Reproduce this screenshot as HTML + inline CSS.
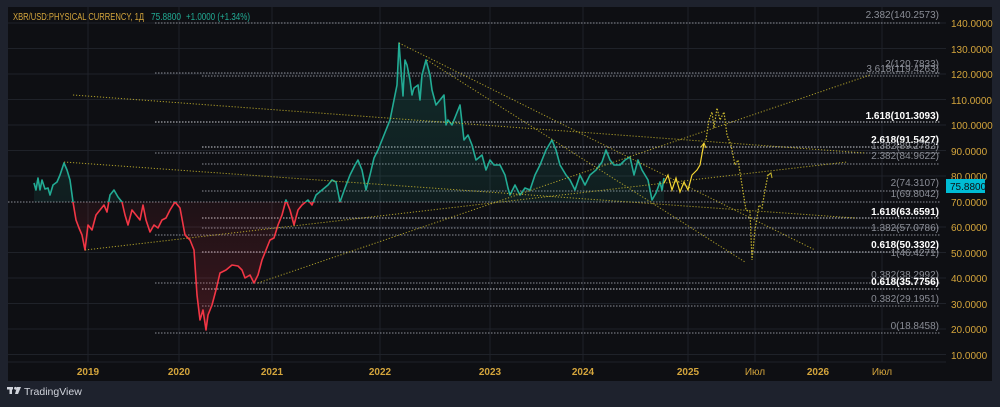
<!DOCTYPE html>
<html><head><meta charset="utf-8"><style>
html,body{margin:0;padding:0;background:#1e222d;width:1000px;height:407px;overflow:hidden;font-family:"Liberation Sans",sans-serif}
svg{position:absolute;left:0;top:0}
</style></head><body>
<svg width="1000" height="407" viewBox="0 0 1000 407">
<defs>
<clipPath id="up"><rect x="0" y="0" width="1000" height="202"/></clipPath>
<clipPath id="dn"><rect x="0" y="202" width="1000" height="200"/></clipPath>
<linearGradient id="gu" x1="0" y1="0" x2="0" y2="1"><stop offset="0" stop-color="#22ab94" stop-opacity="0.18"/><stop offset="1" stop-color="#22ab94" stop-opacity="0.03"/></linearGradient>
<linearGradient id="gd" x1="0" y1="0" x2="0" y2="1"><stop offset="0" stop-color="#f23645" stop-opacity="0.03"/><stop offset="1" stop-color="#f23645" stop-opacity="0.2"/></linearGradient>
</defs>
<rect x="0" y="0" width="1000" height="407" fill="#1e222d"/>
<rect x="8" y="7" width="984" height="374" fill="#0e0f13"/>
<g stroke="#1f2229" stroke-width="1">
<line x1="8" y1="23" x2="946" y2="23"/><line x1="8" y1="48.5" x2="946" y2="48.5"/><line x1="8" y1="74" x2="946" y2="74"/><line x1="8" y1="99.5" x2="946" y2="99.5"/><line x1="8" y1="125" x2="946" y2="125"/><line x1="8" y1="150.5" x2="946" y2="150.5"/><line x1="8" y1="176" x2="946" y2="176"/><line x1="8" y1="227" x2="946" y2="227"/><line x1="8" y1="252.5" x2="946" y2="252.5"/><line x1="8" y1="278" x2="946" y2="278"/><line x1="8" y1="303.5" x2="946" y2="303.5"/><line x1="8" y1="329" x2="946" y2="329"/><line x1="8" y1="354.5" x2="946" y2="354.5"/>
<line x1="88" y1="7" x2="88" y2="362"/><line x1="179" y1="7" x2="179" y2="362"/><line x1="272" y1="7" x2="272" y2="362"/><line x1="380" y1="7" x2="380" y2="362"/><line x1="490" y1="7" x2="490" y2="362"/><line x1="583" y1="7" x2="583" y2="362"/><line x1="688" y1="7" x2="688" y2="362"/><line x1="755" y1="7" x2="755" y2="362"/><line x1="818" y1="7" x2="818" y2="362"/><line x1="882" y1="7" x2="882" y2="362"/>
<line x1="8" y1="362" x2="946" y2="362"/>
</g>
<g stroke="#8a8d96" stroke-width="1" stroke-dasharray="1.5 1.5">
<line x1="155" y1="23" x2="940" y2="23"/>
<line x1="155" y1="73" x2="940" y2="73"/><line x1="202" y1="76" x2="940" y2="76"/>
<line x1="155" y1="122" x2="940" y2="122" stroke="#c8cad0"/>
<line x1="202" y1="147" x2="940" y2="147" stroke="#c8cad0"/><line x1="155" y1="153" x2="940" y2="153"/>
<line x1="202" y1="164" x2="940" y2="164"/>
<line x1="202" y1="191" x2="940" y2="191"/>
<line x1="8" y1="202" x2="940" y2="202"/>
<line x1="202" y1="218" x2="940" y2="218" stroke="#c8cad0"/>
<line x1="202" y1="228" x2="940" y2="228"/>
<line x1="155" y1="235" x2="940" y2="235"/>
<line x1="202" y1="252" x2="940" y2="252" stroke="#c8cad0"/>
<line x1="155" y1="283" x2="940" y2="283"/>
<line x1="202" y1="289" x2="940" y2="289" stroke="#c8cad0"/>
<line x1="202" y1="306" x2="940" y2="306"/>
<line x1="155" y1="333" x2="940" y2="333"/>
</g>
<g font-size="10" text-anchor="end" fill="#8a8d96">
<text x="939" y="18">2.382(140.2573)</text>
<text x="939" y="67">2(120.7833)</text>
<text x="939" y="72">3.618(119.4263)</text>
<text x="939" y="119" fill="#fff" font-weight="bold">1.618(101.3093)</text>
<text x="939" y="143" fill="#fff" font-weight="bold">2.618(91.5427)</text>
<text x="939" y="149">1.382(89.2782)</text>
<text x="939" y="159">2.382(84.9622)</text>
<text x="939" y="186">2(74.3107)</text>
<text x="939" y="197">1(69.8042)</text>
<text x="939" y="215" fill="#fff" font-weight="bold">1.618(63.6591)</text>
<text x="939" y="231">1.382(57.0786)</text>
<text x="939" y="248" fill="#fff" font-weight="bold">0.618(50.3302)</text>
<text x="939" y="256">1(46.4271)</text>
<text x="939" y="278">0.382(38.2992)</text>
<text x="939" y="285" fill="#fff" font-weight="bold">0.618(35.7756)</text>
<text x="939" y="302">0.382(29.1951)</text>
<text x="939" y="329">0(18.8458)</text>
</g>
<polygon points="34,202 34,183 38,178 40,190 42,180 45,189 48,188 50,195 53,185 57,182 60,175 64,163 67,170 70,180 73,202 76,220 79,228 82,235 85,250 88,225 92,230 96,215 100,210 104,205 110,195 114,190 118,197 122,202 125,215 128,225 132,210 136,215 140,220 143,205 146,220 150,232 154,225 158,228 162,220 166,218 170,210 175,202 180,208 185,235 190,240 194,250 197,295 200,320 203,310 206,330 208,315 212,305 216,290 220,273 226,270 232,265 238,266 242,270 245,278 250,275 254,283 258,275 262,260 266,250 270,240 274,238 278,225 282,215 286,200 290,210 294,225 298,210 302,205 308,200 312,205 316,195 322,190 328,185 332,180 336,182 340,202 345,188 350,175 355,165 358,160 362,170 366,190 370,175 374,158 378,150 382,140 386,130 390,120 394,100 397,85 399,43 401,70 404,95 407,65 410,80 414,95 418,85 422,75 426,60 430,75 432,90 436,105 440,100 444,95 448,120 452,125 456,115 460,105 464,140 468,135 472,145 476,160 482,155 486,170 490,160 494,165 500,165 505,175 510,195 515,185 520,195 525,188 530,190 535,175 540,165 546,150 552,140 556,150 560,165 566,175 570,180 575,190 580,175 585,185 590,175 596,170 602,162 606,150 610,160 614,165 620,165 625,160 630,157 634,175 638,160 642,170 648,180 652,200 656,193 660,182 664,178 664,202" fill="url(#gu)" clip-path="url(#up)"/>
<polygon points="34,202 34,183 38,178 40,190 42,180 45,189 48,188 50,195 53,185 57,182 60,175 64,163 67,170 70,180 73,202 76,220 79,228 82,235 85,250 88,225 92,230 96,215 100,210 104,205 110,195 114,190 118,197 122,202 125,215 128,225 132,210 136,215 140,220 143,205 146,220 150,232 154,225 158,228 162,220 166,218 170,210 175,202 180,208 185,235 190,240 194,250 197,295 200,320 203,310 206,330 208,315 212,305 216,290 220,273 226,270 232,265 238,266 242,270 245,278 250,275 254,283 258,275 262,260 266,250 270,240 274,238 278,225 282,215 286,200 290,210 294,225 298,210 302,205 308,200 312,205 316,195 322,190 328,185 332,180 336,182 340,202 345,188 350,202" fill="url(#gd)" clip-path="url(#dn)"/>
<defs><polyline id="pl" fill="none" stroke-width="1.6" stroke-linejoin="round" points="34,183 36,190 38,178 40,190 42,180 45,189 48,188 50,195 53,185 57,182 60,175 64,163 67,170 70,180 73,202 76,220 79,228 82,235 85,250 88,225 92,230 96,215 100,210 104,205 107,212 110,195 114,190 118,197 122,202 125,215 128,225 132,210 136,215 140,220 143,205 146,220 150,232 154,225 158,228 162,220 166,218 170,210 175,202 180,208 185,235 190,240 194,250 197,295 200,320 203,310 206,330 208,315 212,305 216,290 220,273 226,270 232,265 238,266 242,270 245,278 250,275 254,283 258,275 262,260 266,250 270,240 274,238 278,225 282,215 286,200 290,210 294,225 298,210 302,205 308,200 312,205 316,195 322,190 328,185 332,180 336,182 340,202 345,188 350,175 355,165 358,160 362,170 366,190 370,175 374,158 378,150 382,140 386,130 390,120 394,100 397,85 399,43 401,70 403,96 405,60 407,65 410,80 412,95 414,88 418,85 420,100 422,75 426,60 430,75 432,90 436,105 440,100 444,95 446,125 448,120 452,125 456,115 460,105 464,140 468,135 472,145 476,160 482,155 486,170 490,160 494,165 500,165 505,175 508,188 510,195 515,185 520,195 525,188 530,190 535,175 540,165 546,150 552,140 556,150 560,165 566,175 570,180 575,190 580,175 585,185 590,175 596,170 602,162 606,150 610,160 614,165 620,165 625,160 630,157 634,175 638,160 642,170 648,180 652,200 656,193 660,182 662,190 664,178"/></defs>
<use href="#pl" stroke="#22ab94" clip-path="url(#up)"/>
<use href="#pl" stroke="#f23645" clip-path="url(#dn)"/>
<g stroke="#c8b62e" stroke-width="1" stroke-dasharray="1.2 1.8" fill="none" opacity="0.85">
<line x1="73" y1="95" x2="865" y2="153"/>
<line x1="64" y1="162" x2="855" y2="218"/>
<line x1="85" y1="250" x2="847" y2="162"/>
<line x1="258" y1="283" x2="870" y2="75"/>
<line x1="399" y1="43" x2="815" y2="250"/>
<line x1="427" y1="60" x2="745" y2="262"/>
</g>
<polyline fill="none" stroke="#f5d634" stroke-width="1.2" points="664,183 668,175 672,190 676,178 680,192 684,182 688,190 692,175 697,170 700,165 704,143"/>
<polyline fill="none" stroke="#f5d634" stroke-width="1" points="701,147 704,143 706,148"/>
<polyline fill="none" stroke="#c8b62e" stroke-width="1.2" stroke-dasharray="1.5 1.5" points="706,140 709,120 712,112 714,128 717,108 720,120 724,112 727,135 731,145 735,165 738,160 742,185 746,210 750,212 752,260 755,230 759,205 762,208 765,190 768,175 771,173"/>
<polyline fill="none" stroke="#c8b62e" stroke-width="1" points="767,176 771,173 772,178"/>
<text x="13" y="20" font-size="10" fill="#d4a53c" textLength="131" lengthAdjust="spacingAndGlyphs">XBR/USD:PHYSICAL CURRENCY, 1Д</text>
<text x="151" y="20" font-size="10" fill="#22ab94" textLength="30" lengthAdjust="spacingAndGlyphs">75.8800</text>
<text x="186" y="20" font-size="10" fill="#22ab94" textLength="64" lengthAdjust="spacingAndGlyphs">+1.0000 (+1.34%)</text>
<g font-size="10" fill="#d4a53c" text-anchor="start">
<text x="951" y="27">140.0000</text><text x="951" y="53">130.0000</text><text x="951" y="78">120.0000</text><text x="951" y="104">110.0000</text><text x="951" y="129">100.0000</text><text x="951" y="155">90.0000</text><text x="951" y="180">80.0000</text><text x="951" y="206">70.0000</text><text x="951" y="231">60.0000</text><text x="951" y="257">50.0000</text><text x="951" y="282">40.0000</text><text x="951" y="308">30.0000</text><text x="951" y="333">20.0000</text><text x="951" y="359">10.0000</text>
</g>
<rect x="946" y="179" width="39" height="14" fill="#00bcd4"/>
<text x="950" y="190" font-size="10" fill="#0e0f13">75.8800</text>
<g font-size="10" fill="#d4a53c" text-anchor="middle" font-weight="bold">
<text x="88" y="375">2019</text><text x="179" y="375">2020</text><text x="272" y="375">2021</text><text x="380" y="375">2022</text><text x="490" y="375">2023</text><text x="583" y="375">2024</text><text x="688" y="375">2025</text><text x="755" y="375" font-weight="normal">Июл</text><text x="818" y="375">2026</text><text x="882" y="375" font-weight="normal">Июл</text>
</g>
<g fill="#d1d4dc">
<rect x="7" y="387" width="6" height="2.5"/><rect x="9.5" y="387" width="2.5" height="7"/>
<circle cx="15.5" cy="388.3" r="1.4"/>
<polygon points="17,387 21,387 18,394 15,394"/>
</g>
<text x="24" y="395" font-size="10.5" fill="#d1d4dc">TradingView</text>
</svg>
</body></html>
